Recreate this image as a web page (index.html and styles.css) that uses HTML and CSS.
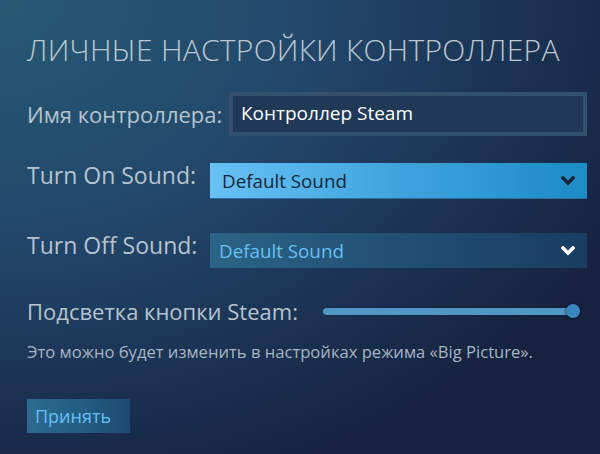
FILE: index.html
```html
<!DOCTYPE html>
<html lang="ru">
<head>
<meta charset="utf-8">
<title>Личные настройки контроллера</title>
<link rel="stylesheet" href="styles.css">
</head>
<body>
<main class="panel">
  <h1 class="title">ЛИЧНЫЕ НАСТРОЙКИ КОНТРОЛЛЕРА</h1>

  <div class="row row-name">
    <label class="label">Имя контроллера:</label>
    <div class="text-input">Контроллер Steam</div>
  </div>

  <div class="row row-on">
    <label class="label label-lg">Turn On Sound:</label>
    <div class="select select-active">
      <span>Default Sound</span>
      <svg class="chev" viewBox="0 0 14 10" width="14" height="10"><polyline points="2,2 7,7 12,2" fill="none" stroke="currentColor" stroke-width="3.6" stroke-linecap="square"/></svg>
    </div>
  </div>

  <div class="row row-off">
    <label class="label label-lg">Turn Off Sound:</label>
    <div class="select select-idle">
      <span>Default Sound</span>
      <svg class="chev" viewBox="0 0 14 10" width="14" height="10"><polyline points="2,2 7,7 12,2" fill="none" stroke="currentColor" stroke-width="3.6" stroke-linecap="square"/></svg>
    </div>
  </div>

  <div class="row row-slider">
    <label class="label">Подсветка кнопки Steam:</label>
    <div class="slider">
      <div class="track"></div>
      <div class="knob"></div>
    </div>
  </div>

  <p class="note">Это можно будет изменить в настройках режима «Big Picture».</p>

  <button class="btn">Принять</button>
</main>
</body>
</html>
```

FILE: styles.css
```css
html, body {
  margin: 0;
  padding: 0;
  width: 600px;
  height: 454px;
  overflow: hidden;
}

body {
  font-family: "Open Sans", "Noto Sans", sans-serif;
  background:
    radial-gradient(ellipse 700px 520px at 0% 0%, #275a74 0%, #22476a 45%, #1b3253 75%, #17223f 100%);
  color: #b9c7d2;
}

.panel {
  box-sizing: border-box;
  width: 600px;
  height: 454px;
  padding: 35px 13px 0 27px;
}

.title {
  margin: 0;
  font-size: 30px;
  line-height: 30px;
  font-weight: 300;
  color: #bcc8d2;
  letter-spacing: 0.25px;
  white-space: nowrap;
}

.row {
  display: flex;
  justify-content: space-between;
  align-items: flex-start;
}

.label {
  font-size: 22px;
  line-height: 26px;
  color: #b6c4cf;
  white-space: nowrap;
}

.label-lg {
  font-size: 23px;
  line-height: 24px;
}

.row-name {
  margin-top: 27px;
  align-items: center;
}

.text-input {
  box-sizing: border-box;
  width: 358px;
  height: 44px;
  border: 4px solid #33506f;
  background: #1f3957;
  color: #ffffff;
  font-size: 19px;
  line-height: 35px;
  padding-left: 8px;
}

.row-on {
  margin-top: 27px;
}

.row-off {
  margin-top: 34px;
}

.select {
  box-sizing: border-box;
  width: 377px;
  height: 36px;
  display: flex;
  align-items: center;
  justify-content: space-between;
  padding: 0 12px 0 12px;
  font-size: 18.8px;
}

.select-active {
  background: linear-gradient(90deg, #67c1f5 0%, #3fa4dd 50%, #1c8bc6 100%);
  border-bottom: 1px solid #2d6e99;
  color: #16253a;
}

.select-idle {
  height: 35px;
  padding-left: 9px;
  background: linear-gradient(90deg, #2b6486 0%, #224f74 50%, #1a3c61 100%);
  color: #66c0f4;
}

.select-idle .chev {
  color: #ffffff;
}

.chev {
  display: block;
  margin-top: 1px;
}

.row-slider {
  margin-top: 30px;
  align-items: center;
  padding-right: 7px;
}

.slider {
  position: relative;
  width: 257px;
  height: 16px;
}

.track {
  position: absolute;
  left: 0;
  right: 4px;
  top: 5px;
  height: 7px;
  border-radius: 4px;
  background: #5197c3;
  box-shadow: 0 0 2px rgba(10, 20, 40, 0.6);
}

.knob {
  position: absolute;
  right: 0;
  top: 1px;
  width: 14px;
  height: 14px;
  border-radius: 50%;
  background: #3a87bf;
  box-shadow: 0 0 3px rgba(5, 10, 25, 0.9);
}

.note {
  margin: 17px 0 0 0;
  font-size: 16.6px;
  line-height: 22px;
  color: #a6b6c3;
  white-space: nowrap;
}

.btn {
  display: block;
  margin-top: 36px;
  box-sizing: border-box;
  width: 103px;
  height: 34px;
  border: none;
  padding: 0 0 0 8px;
  text-align: left;
  font-family: "Open Sans", "Noto Sans", sans-serif;
  font-size: 18px;
  color: #66c0f4;
  background: linear-gradient(90deg, #2c6b8f 0%, #235a80 60%, #1d4a70 100%);
}
```
